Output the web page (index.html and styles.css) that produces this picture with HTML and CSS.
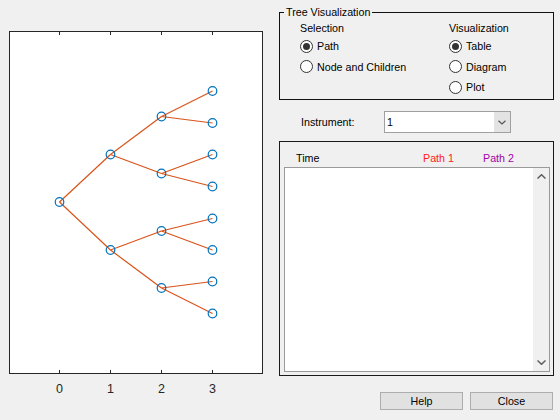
FILE: index.html
```html
<!DOCTYPE html>
<html>
<head>
<meta charset="utf-8">
<link rel="stylesheet" href="styles.css">
</head>
<body>
<div class="app">
  <div class="plot-area">
    <svg class="plot" width="279" height="420" viewBox="0 0 279 420">
      <rect x="9.5" y="31.5" width="253" height="342" fill="#fff" stroke="#262626" stroke-width="1"/>
      <g stroke="#262626" stroke-width="1">
        <line x1="59.5" y1="32" x2="59.5" y2="35"/>
        <line x1="110.5" y1="32" x2="110.5" y2="35"/>
        <line x1="161.5" y1="32" x2="161.5" y2="35"/>
        <line x1="212.5" y1="32" x2="212.5" y2="35"/>
        <line x1="59.5" y1="370" x2="59.5" y2="373"/>
        <line x1="110.5" y1="370" x2="110.5" y2="373"/>
        <line x1="161.5" y1="370" x2="161.5" y2="373"/>
        <line x1="212.5" y1="370" x2="212.5" y2="373"/>
      </g>
      <g stroke="#D95319" stroke-width="1.2" fill="none">
        <line x1="59.5" y1="202" x2="110.5" y2="154.5"/>
        <line x1="59.5" y1="202" x2="110.5" y2="250"/>
        <line x1="110.5" y1="154.5" x2="161.5" y2="116.5"/>
        <line x1="110.5" y1="154.5" x2="161.5" y2="173.5"/>
        <line x1="110.5" y1="250" x2="161.5" y2="231"/>
        <line x1="110.5" y1="250" x2="161.5" y2="288"/>
        <line x1="161.5" y1="116.5" x2="212.5" y2="91"/>
        <line x1="161.5" y1="116.5" x2="212.5" y2="123"/>
        <line x1="161.5" y1="173.5" x2="212.5" y2="154.5"/>
        <line x1="161.5" y1="173.5" x2="212.5" y2="186.5"/>
        <line x1="161.5" y1="231" x2="212.5" y2="218.5"/>
        <line x1="161.5" y1="231" x2="212.5" y2="250"/>
        <line x1="161.5" y1="288" x2="212.5" y2="281.5"/>
        <line x1="161.5" y1="288" x2="212.5" y2="313.5"/>
      </g>
      <g stroke="#0072BD" stroke-width="1.2" fill="none">
        <circle cx="59.5" cy="202" r="4.3"/>
        <circle cx="110.5" cy="154.5" r="4.3"/>
        <circle cx="110.5" cy="250" r="4.3"/>
        <circle cx="161.5" cy="116.5" r="4.3"/>
        <circle cx="161.5" cy="173.5" r="4.3"/>
        <circle cx="161.5" cy="231" r="4.3"/>
        <circle cx="161.5" cy="288" r="4.3"/>
        <circle cx="212.5" cy="91" r="4.3"/>
        <circle cx="212.5" cy="123" r="4.3"/>
        <circle cx="212.5" cy="154.5" r="4.3"/>
        <circle cx="212.5" cy="186.5" r="4.3"/>
        <circle cx="212.5" cy="218.5" r="4.3"/>
        <circle cx="212.5" cy="250" r="4.3"/>
        <circle cx="212.5" cy="281.5" r="4.3"/>
        <circle cx="212.5" cy="313.5" r="4.3"/>
      </g>
      <g class="tick-labels" fill="#262626" text-anchor="middle">
        <text x="59.5" y="392.5">0</text>
        <text x="110.5" y="392.5">1</text>
        <text x="161.5" y="392.5">2</text>
        <text x="212.5" y="392.5">3</text>
      </g>
    </svg>
  </div>
  <div class="side">
    <div class="group">
      <span class="group-title">Tree Visualization</span>
      <div class="group-cols">
        <div class="col col-sel">
          <div class="col-head">Selection</div>
          <div class="opt"><span class="radio on"></span>Path</div>
          <div class="opt"><span class="radio"></span>Node and Children</div>
        </div>
        <div class="col">
          <div class="col-head">Visualization</div>
          <div class="opt"><span class="radio on"></span>Table</div>
          <div class="opt"><span class="radio"></span>Diagram</div>
          <div class="opt"><span class="radio"></span>Plot</div>
        </div>
      </div>
    </div>
    <div class="instrument-row">
      <span class="inst-label">Instrument:</span>
      <div class="select">
        <span class="select-value">1</span>
        <span class="select-arrow"><svg width="8" height="5" viewBox="0 0 8 5"><polyline points="0.5,0.7 4,4 7.5,0.7" fill="none" stroke="#555" stroke-width="1.2"/></svg></span>
      </div>
    </div>
    <div class="table-panel">
      <div class="table-head">
        <span class="th th-time">Time</span>
        <span class="th th-p1">Path 1</span>
        <span class="th th-p2">Path 2</span>
      </div>
      <div class="listbox">
        <div class="scrollbar">
          <span class="sb-btn"><svg width="9" height="5" viewBox="0 0 9 5"><polyline points="0.5,4.5 4.5,0.7 8.5,4.5" fill="none" stroke="#606060" stroke-width="1.5"/></svg></span>
          <span class="sb-btn"><svg width="9" height="5" viewBox="0 0 9 5"><polyline points="0.5,0.5 4.5,4.3 8.5,0.5" fill="none" stroke="#606060" stroke-width="1.5"/></svg></span>
        </div>
      </div>
    </div>
    <div class="buttons">
      <button class="btn">Help</button>
      <button class="btn">Close</button>
    </div>
  </div>
</div>
</body>
</html>
```
FILE: styles.css
```css
* { box-sizing: border-box; }
body {
  margin: 0;
  background: #f0f0f0;
  font-family: "Liberation Sans", Arial, sans-serif;
  font-size: 10.7px;
  color: #000;
}
.app { display: flex; width: 560px; height: 420px; }
.plot-area { flex: none; width: 279px; }
.plot { display: block; }
.tick-labels { font-family: "Liberation Sans", Arial, sans-serif; font-size: 12.5px; }
.side { flex: none; width: 275px; display: flex; flex-direction: column; }

.group {
  position: relative;
  margin-top: 12px;
  height: 88px;
  border: 1px solid #111;
  padding: 8px 0 0 20px;
}
.group-title {
  position: absolute;
  top: -7px;
  left: 4px;
  padding: 0 2px;
  background: #f0f0f0;
  line-height: 13px;
}
.group-cols { display: flex; }
.col { display: flex; flex-direction: column; }
.col-sel { width: 149px; }
.col-head { height: 14px; line-height: 14px; margin-bottom: 1px; }
.opt { display: flex; align-items: center; height: 20.5px; white-space: nowrap; }
.radio {
  flex: none;
  width: 13px;
  height: 13px;
  margin-right: 4px;
  border: 1px solid #333;
  border-radius: 50%;
  background: #fff;
  display: flex;
  align-items: center;
  justify-content: center;
}
.radio.on::after {
  content: "";
  width: 7px;
  height: 7px;
  border-radius: 50%;
  background: #333;
}

.instrument-row { display: flex; align-items: center; margin-top: 11px; height: 22px; }
.inst-label { width: 105px; padding-left: 22px; }
.select {
  width: 127px;
  height: 22px;
  border: 1px solid #a0a0a0;
  background: #fff;
  display: flex;
}
.select-value { flex: 1; padding-left: 2px; line-height: 20px; }
.select-arrow {
  width: 16px;
  background: #e3e3e3;
  display: flex;
  align-items: center;
  justify-content: center;
}
.select-arrow svg, .sb-btn svg { display: block; }

.table-panel {
  margin-top: 8px;
  height: 235px;
  border: 1px solid #1a1a1a;
  display: flex;
  flex-direction: column;
  padding: 0 3px 3px 4px;
}
.table-head { display: flex; height: 25px; padding: 10px 0 0 12px; line-height: 13px; }
.th-time { width: 127px; }
.th-p1 { width: 60px; color: #ff1a1a; }
.th-p2 { color: #a000a8; }
.listbox {
  flex: 1;
  border: 1px solid #9a9a9a;
  background: #fff;
  display: flex;
  justify-content: flex-end;
}
.scrollbar {
  width: 16px;
  background: #f0f0f0;
  display: flex;
  flex-direction: column;
  justify-content: space-between;
}
.sb-btn { height: 17px; display: flex; align-items: center; justify-content: center; }

.buttons { display: flex; justify-content: flex-end; gap: 7px; margin-top: 16px; margin-right: 1px; }
.btn {
  width: 83px;
  height: 18px;
  padding: 0;
  background: #e1e1e1;
  border: 1px solid #adadad;
  font-family: inherit;
  font-size: inherit;
  font-weight: normal;
  color: #000;
}
```
